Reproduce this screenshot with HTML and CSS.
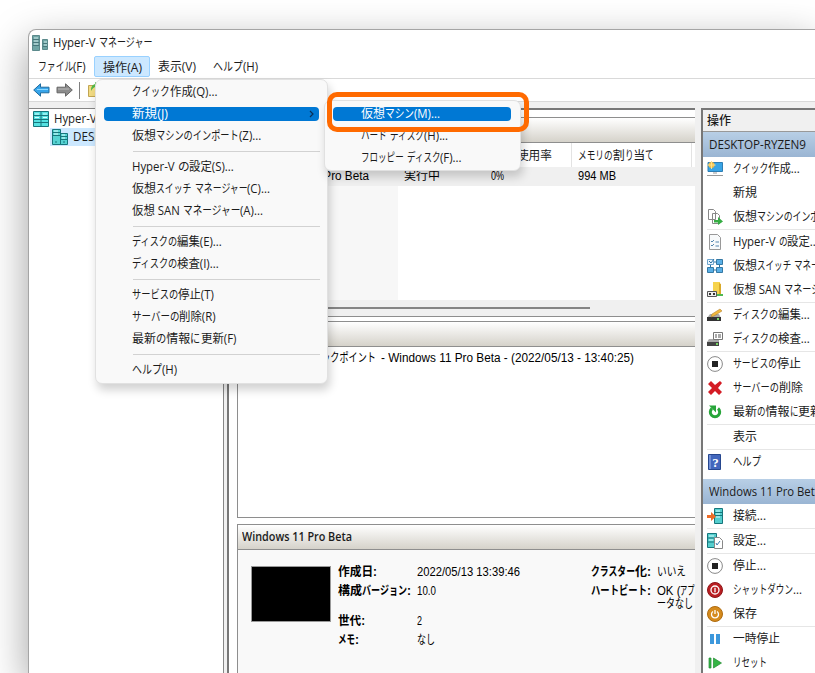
FILE: index.html
```html
<!DOCTYPE html>
<html lang="ja">
<head>
    <meta charset="UTF-8">
    <title>Hyper-V マネージャー</title>
    <link rel="stylesheet" href="styles.css">
</head>
<body>
<svg class="defs" width="0" height="0">
    <symbol id="i-server" viewBox="0 0 16 16">
        <path fill="#55d3d3" stroke="#16767c" d="M.5.5h8v15h-8zM8.500 4.500h7v11h-7z"/>
        <path stroke="#16767c" d="M1 3.500h7M1 6.500h7M9 7.500h6M9 10.500h6M3 13h2M11 13h2"/>
        <path stroke="#d8ffff" d="M2 2h4M2 5h4M10 6h3M10 9h3"/>
    </symbol>
    <symbol id="i-stop" viewBox="0 0 16 16">
        <circle cx="8" cy="8" r="7.400" fill="#fff" stroke="#888"/>
        <path fill="#222" d="M5 5h6v6H5z"/>
    </symbol>
</svg>

<div class="window">
    <div class="titlebar">
        <svg class="app-icon" width="17" height="16" viewBox="0 0 17 16">
            <path fill="#6fa5a5" stroke="#5c8a8c" d="M.5.5h7v15h-7zM10.500 4.500h5v10h-5z"/>
            <path stroke="#d4eded" d="M2 3h4M2 6h4M2 9h4M12 7h3M12 10h3"/>
            <path stroke="#47777b" d="M1 4.500h6M1 7.500h6M1 10.500h6M11 8.500h4M11 11.500h4"/>
        </svg>
        <span data-w="99">Hyper-V マネージャー</span>
    </div>
    <div class="menubar">
        <div class="menu-title m1"><span data-w="48">ファイル(F)</span></div>
        <div class="menu-title m2 open"><span data-w="39">操作(A)</span></div>
        <div class="menu-title m3"><span data-w="38">表示(V)</span></div>
        <div class="menu-title m4"><span data-w="45">ヘルプ(H)</span></div>
    </div>
    <div class="toolbar">
        <svg width="17" height="14" viewBox="0 0 17 14"><path fill="#37a5ea" stroke="#1f6b9e" d="M.7 7 7.500.8v3.400h8.500v5.600H7.500v3.400z"/><path stroke="#8ad7ff" d="M4 6.500h11"/></svg>
        <svg width="17" height="14" viewBox="0 0 17 14"><path fill="#8c8c8c" stroke="#666" d="M16.300 7 9.500.8v3.400H1v5.600h8.500v3.400z"/><path stroke="#bbb" d="M2 6h11"/></svg>
        <i class="tool-sep"></i>
        <svg width="16" height="16" viewBox="0 0 16 16"><path fill="#f3dc84" stroke="#c2a654" d="M.5 3.500h5l2 2h8v9H.5z"/><path fill="#54b948" d="M3 9c0-4 1-6 4-7V0l5 4-5 4V5C5 6 4 7 3 9z"/></svg>
    </div>

    <div class="panes">
        <div class="tree">
            <div class="node root"><svg width="16" height="16" viewBox="0 0 16 16"><path fill="#55e1e1" stroke="#16767c" d="M.5.5h15v15H.5z"/><path stroke="#16767c" d="M8 1v14M1 4.500h14M1 8.500h14M1 11.500h14"/><path stroke="#d8ffff" d="M2 3h4M10 3h4M2 6.500h4M10 6.500h4"/></svg><span data-w="99">Hyper-V マネージャー</span></div>
            <div class="node host"><svg width="16" height="16"><use href="#i-server"/></svg><span data-w="97">DESKTOP-RYZEN9</span></div>
        </div>

        <div class="center">
            <div class="box vms">
                <div class="box-head"></div>
                <div class="vm-row cols">
                    <div class="c-name"></div>
                    <div class="c-state"></div>
                    <div class="c-cpu"><span data-w="61">CPU 使用率</span></div>
                    <div class="c-mem"><span data-w="76">メモリの割り当て</span></div>
                </div>
                <div class="vm-row selected legacy">
                    <div class="c-name"><span data-w="112">Windows 11 Pro Beta</span></div>
                    <div class="c-state"><span data-w="36">実行中</span></div>
                    <div class="c-cpu"><span data-w="13">0%</span></div>
                    <div class="c-mem"><span data-w="38">994 MB</span></div>
                </div>
                <div class="vm-space"></div>
                <div class="scroll"><div class="thumb"></div></div>
            </div>
            <div class="box checkpoints">
                <div class="box-head"></div>
                <div class="checkpoint legacy"><span data-w="97">自動チェックポイント</span><span data-w="253">- Windows 11 Pro Beta - (2022/05/13 - 13:40:25)</span></div>
            </div>
            <div class="box details">
                <div class="box-head"><span data-w="110">Windows 11 Pro Beta</span></div>
                <div class="detail-body legacy">
                    <div class="thumbnail"></div>
                    <dl class="info left">
                        <dt><span data-w="39">作成日:</span></dt><dd><span data-w="103">2022/05/13 13:39:46</span></dd>
                        <dt><span data-w="73">構成バージョン:</span></dt><dd><span data-w="19">10.0</span></dd>
                        <dt class="gap"><span data-w="27">世代:</span></dt><dd class="gap"><span data-w="5">2</span></dd>
                        <dt><span data-w="21">メモ:</span></dt><dd><span data-w="18">なし</span></dd>
                    </dl>
                    <dl class="info right">
                        <dt><span data-w="60">クラスター化:</span></dt><dd><span data-w="29">いいえ</span></dd>
                        <dt><span data-w="60">ハートビート:</span></dt><dd class="two"><span data-w="38">OK (アプ</span><br><span data-w="36">ータなし</span></dd>
                    </dl>
                </div>
            </div>
        </div>

        <div class="actions">
            <div class="actions-title"><span data-w="24">操作</span></div>
            <div class="group"><span data-w="97">DESKTOP-RYZEN9</span></div>
            <div class="action"><svg viewBox="0 0 16 16"><path fill="#38a4e5" stroke="#2d7eb5" d="M1 1.500h14.500v9H1z"/><path stroke="#999" d="M0 14.500h16M6 12h4"/><circle cx="4.500" cy="4" r="3" fill="#f3bd45"/><path stroke="#ffe18a" d="M4.500 0v8M.5 4h8"/></svg><span data-w="67">クイック作成...</span></div>
            <div class="action"><svg></svg><span data-w="24">新規</span></div>
            <div class="action sep"><svg viewBox="0 0 16 16"><path fill="#fff" stroke="#888" d="M1.500.5h5l2 2v8h-7zM5.500 4.500h5l2 2v8h-7z"/><path fill="#35ad43" d="M7 11h4V8l5 4.500-5 3.500v-2.500H7z"/></svg><span data-w="113">仮想マシンのインポート...</span></div>
            <div class="action"><svg viewBox="0 0 16 16"><path fill="#f8fafb" stroke="#999" d="M2.500.5h8l3 3v12h-11z"/><path fill="none" stroke="#5586ad" d="m4 7 1 1 2-2M4 11l1 1 2-2M8.500 8H12M8.500 12H12"/></svg><span data-w="86">Hyper-V の設定...</span></div>
            <div class="action"><svg viewBox="0 0 16 16"><path fill="#59afe6" stroke="#3579a4" d="M9.500 1.500h6v5h-6zM.5 9.500h6v5h-6zM9.500 9.500h6v5h-6z"/><path fill="#eaf5ff" stroke="#6da5ce" d="M.5 1.500h6v5h-6z"/><path fill="none" stroke="#286f9f" d="m2 3 2 2 3-4M7 4h2M3.500 7v2M12.500 7v2M7 12h2"/></svg><span data-w="121">仮想スイッチ マネージャー...</span></div>
            <div class="action sep"><svg viewBox="0 0 16 16"><path fill="#f6d34d" d="M6 0h7v12H6z"/><path fill="#d9a929" d="m12 1 2 1v10h-2z"/><path fill="#eee" stroke="#555" d="M.5 9.500h9v5h-9z"/><path fill="#333" d="M2 11h2v2H2zM6 11h2v2H6z"/><path fill="#4eb852" d="M10 12h6v2h-6z"/></svg><span data-w="114">仮想 SAN マネージャー...</span></div>
            <div class="action"><svg viewBox="0 0 16 16"><path fill="#aaa" d="m3 7-3 4h14l-2-4z"/><path fill="#333" d="M0 10h14v4H0z"/><path fill="#75d463" d="M10 11h2v2h-2z"/><path fill="#f0b73d" stroke="#a9792d" stroke-width=".5" d="m4 10 1-3 8-5 2 2-8 5z"/></svg><span data-w="77">ディスクの編集...</span></div>
            <div class="action sep"><svg viewBox="0 0 16 16"><path fill="#aaa" d="m2 8-2 3h12V8z"/><path fill="#444" d="M0 11h12v4H0z"/><path fill="#75d463" d="M9 12h2v2H9z"/><path fill="#fff" stroke="#777" d="M6.500 1.500h9v7h-9z"/><path stroke="#555" d="M8 4h2m1 0h3M8 6h2m1 0h3"/></svg><span data-w="77">ディスクの検査...</span></div>
            <div class="action"><svg><use href="#i-stop"/></svg><span data-w="68">サービスの停止</span></div>
            <div class="action"><svg viewBox="0 0 16 16"><path fill="#d41b24" d="m1 4 3-3 4 4 5-4 2 2-4 5 4 4-3 3-4-4-4 4-3-3 4-4z"/></svg><span data-w="70">サーバーの削除</span></div>
            <div class="action sep"><svg viewBox="0 0 16 16"><path fill="none" stroke="#27a53a" stroke-width="3" d="M11 4.500a4.700 4.700 0 1 1-6 0"/><path fill="#27a53a" d="M2 1.500h7v7z"/></svg><span data-w="89">最新の情報に更新</span></div>
            <div class="action sep"><svg></svg><span data-w="24">表示</span></div>
            <div class="action"><svg viewBox="0 0 16 16"><path fill="#4267bd" stroke="#26478e" d="M1.500.5h12v15h-12z"/><path stroke="#a0b8ee" d="M3 1v14"/><text x="8.500" y="12.500" text-anchor="middle" class="q">?</text></svg><span data-w="28">ヘルプ</span></div>
            <div class="group second"><span data-w="112">Windows 11 Pro Beta</span></div>
            <div class="action sep"><svg viewBox="0 0 16 16"><path fill="#55cece" stroke="#16767c" d="M7.500.5h8v15h-8z"/><path stroke="#d8ffff" d="M9 3h4M9 6h4M9 9h4"/><path stroke="#16767c" d="M8 4.500h7M8 7.500h7"/><path fill="#ed6c27" d="M0 7h4V4l5 4.500L4 13v-3H0z"/></svg><span data-w="33">接続...</span></div>
            <div class="action sep"><svg viewBox="0 0 16 16"><path fill="#55cece" stroke="#16767c" d="M.5.5h9v14h-9z"/><path stroke="#d8ffff" d="M2 3h5M2 7h4"/><path stroke="#16767c" d="M1 5h8M1 9h6"/><path fill="#fff" stroke="#888" d="M7.500 4.500h5l3 3v8h-8z"/><path fill="none" stroke="#3c7caf" d="m9 10 1 2 3-4"/></svg><span data-w="33">設定...</span></div>
            <div class="action"><svg><use href="#i-stop"/></svg><span data-w="33">停止...</span></div>
            <div class="action"><svg viewBox="0 0 16 16"><circle cx="8" cy="8" r="7.500" fill="#b91e22" stroke="#8e1519"/><circle cx="8" cy="8" r="4" fill="none" stroke="#fff" stroke-width="1.300"/><path stroke="#fff" stroke-width="1.300" d="M8 5.800v4.400"/></svg><span data-w="69">シャットダウン...</span></div>
            <div class="action sep"><svg viewBox="0 0 16 16"><circle cx="8" cy="8" r="7.500" fill="#d58a1c" stroke="#ae6c11"/><path fill="none" stroke="#fff" stroke-width="1.300" d="M6 5.500a3.500 3.500 0 1 0 4 0M8 4v4"/></svg><span data-w="24">保存</span></div>
            <div class="action"><svg viewBox="0 0 16 16"><path fill="#3d98dc" d="M3 3h4v10H3zM9 3h4v10H9z"/></svg><span data-w="47">一時停止</span></div>
            <div class="action"><svg viewBox="0 0 16 16"><path fill="#35b545" stroke="#218a30" stroke-width=".7" d="M2 3h2v10H2zM6.500 3l8 5-8 5z"/></svg><span data-w="34">リセット</span></div>
        </div>
    </div>
</div>

<div class="popup main-menu">
    <div class="item"><span data-w="85">クイック作成(Q)...</span></div>
    <div class="item active"><span data-w="36">新規(J)</span><svg class="arrow" width="5" height="8" viewBox="0 0 5 8"><path fill="none" stroke="#0b2f55" stroke-width="1.200" d="m1 1 3 3-3 3"/></svg></div>
    <div class="item"><span data-w="129">仮想マシンのインポート(Z)...</span></div>
    <hr>
    <div class="item"><span data-w="102">Hyper-V の設定(S)...</span></div>
    <div class="item"><span data-w="138">仮想スイッチ マネージャー(C)...</span></div>
    <div class="item"><span data-w="131">仮想 SAN マネージャー(A)...</span></div>
    <hr>
    <div class="item"><span data-w="90">ディスクの編集(E)...</span></div>
    <div class="item"><span data-w="87">ディスクの検査(I)...</span></div>
    <hr>
    <div class="item"><span data-w="82">サービスの停止(T)</span></div>
    <div class="item"><span data-w="84">サーバーの削除(R)</span></div>
    <div class="item"><span data-w="104">最新の情報に更新(F)</span></div>
    <hr>
    <div class="item"><span data-w="45">ヘルプ(H)</span></div>
</div>

<div class="popup sub-menu">
    <div class="item active"><span data-w="79">仮想マシン(M)...</span></div>
    <div class="item"><span data-w="87">ハード ディスク(H)...</span></div>
    <div class="item"><span data-w="101">フロッピー ディスク(F)...</span></div>
</div>
<div class="marker"></div>

<script src="script.js"></script>
</body>
</html>
```
FILE: styles.css
```css
* {
    box-sizing: border-box;
}
body {
    margin: 0;
    padding: 29px 0 0 28px;
    width: 815px;
    height: 673px;
    overflow: hidden;
    background: #fff;
    color: #1b1b1b;
    font: 12px/16px "Open Sans", "Noto Sans CJK JP", sans-serif;
    white-space: nowrap;
}
.defs {
    position: absolute;
}
svg {
    flex: none;
    display: block;
}
.fit {
    display: inline-block;
    transform-origin: 0 50%;
    white-space: pre;
}
.legacy {
    font-family: "Liberation Sans", "Noto Sans CJK JP", sans-serif;
    color: #000;
}

/* window */
.window {
    width: 787px;
    height: 644px;
    border: 1px solid #a5a5a5;
    border-width: 1px 0 0 1px;
    border-radius: 8px 0 0 0;
    background: #fff;
    box-shadow: 0 14px 42px rgba(0, 0, 0, .38);
    overflow: hidden;
}
.titlebar {
    display: flex;
    align-items: center;
    height: 25px;
    padding: 0 0 0 3px;
    gap: 4px;
}
.menubar {
    display: flex;
    align-items: center;
    height: 24px;
    border-bottom: 1px solid #d9d9d9;
}
.menu-title {
    height: 21px;
    line-height: 20px;
    padding: 1px 8px;
}
.m1 {
    padding-left: 9px;
    width: 65px;
}
.m2 {
    width: 56px;
}
.m3 {
    width: 55px;
}
.menu-title.open {
    background: #cce8ff;
    border: 1px solid #99d1ff;
    border-radius: 2px;
    line-height: 20px;
}
.toolbar {
    display: flex;
    align-items: center;
    height: 23px;
    padding-left: 4px;
    gap: 6px;
    border-bottom: 1px solid #d9d9d9;
}
.tool-sep {
    width: 1px;
    height: 17px;
    margin-right: 2px;
    background: #808080;
}
.panes {
    display: flex;
    height: 571px;
    padding-top: 6px;
    background: #f0f0f0;
}

/* left tree */
.tree {
    flex: none;
    width: 195px;
    margin-right: 3px;
    background: #fff;
    border: 1px solid #868686;
    border-width: 1px 1px 0 0;
    padding-top: 1px;
}
.node {
    display: flex;
    align-items: center;
    height: 18px;
    padding-left: 4px;
    gap: 5px;
}
.host {
    margin-left: 21px;
    padding-left: 2px;
    background: #cce8ff;
}

/* center column */
.center {
    flex: none;
    width: 468px;
    padding: 7px 0 0 8px;
    border-top: 2px solid #777;
    border-left: 2px solid #777;
    background: #fff;
    overflow: hidden;
}
.box {
    width: 458px;
    border: 1px solid #8e8e8e;
    border-right: 0;
}
.box-head {
    height: 25px;
    padding: 4px;
    line-height: 16px;
    border-bottom: 1px solid #8e8e8e;
    background: linear-gradient(#fff, #d5d2ca);
    font-weight: 600;
}
.vms {
    height: 200px;
}
.vm-row {
    display: flex;
    height: 24px;
    line-height: 25px;
}
.vm-row > div {
    flex: none;
    padding-left: 6px;
}
.vm-row .c-name {
    width: 160px;
    padding-left: 19px;
}
.c-state {
    width: 87px;
}
.c-cpu {
    width: 87px;
}
.c-mem {
    width: 120px;
}
.cols > div {
    border-right: 1px solid #e3e3e3;
}
.selected {
    height: 19px;
    line-height: 19px;
    background: #f0f0f0;
}
.vm-space {
    width: 160px;
    height: 114px;
    background: #f7f7f7;
}
.scroll {
    height: 16px;
    padding-top: 7px;
    background: #f0f0f0;
}
.thumb {
    width: 352px;
    height: 2px;
    background: #858585;
}
.checkpoints {
    margin-top: 4px;
    height: 197px;
}
.checkpoint {
    display: flex;
    gap: 5px;
    padding: 3px 0 0 41px;
}
.details {
    margin-top: 6px;
    height: 150px;
    border-bottom: 0;
    background: #f9f9f9;
}
.detail-body {
    display: flex;
    padding: 13px 0 0 13px;
}
.thumbnail {
    flex: none;
    width: 80px;
    height: 56px;
    margin-top: 3px;
    background: #000;
    border: 1px solid #999;
}
.info {
    flex: none;
    display: grid;
    margin: 0;
    line-height: 19px;
    align-content: start;
}
.info dt {
    font-weight: bold;
}
.info dd {
    margin: 0;
}
.left {
    grid-template-columns: 79px 174px;
    margin-left: 7px;
}
.right {
    grid-template-columns: 66px 36px;
}
.info .gap {
    margin-top: 11px;
}
.two {
    line-height: 13px;
    padding-top: 3px;
}

/* actions pane */
.actions {
    flex: none;
    width: 114px;
    margin-left: 6px;
    border-top: 2px solid #777;
    border-left: 2px solid #777;
    background: #fff;
    overflow: hidden;
}
.actions-title {
    height: 22px;
    padding-left: 4px;
    line-height: 22px;
    font-weight: 500;
    background: #f0f0f0;
    border-bottom: 1px solid #999;
}
.group {
    height: 25px;
    padding-left: 6px;
    line-height: 25px;
    background: linear-gradient(#b8cfe6, #9ab5d3);
}
.second {
    margin: 5px 0 0;
}
.action {
    display: flex;
    align-items: center;
    height: 24px;
    padding-left: 4px;
    gap: 10px;
}
.action svg {
    width: 16px;
    height: 16px;
}
.sep {
    height: 25px;
    padding-bottom: 1px;
    background: linear-gradient(#e6e6e6, #e6e6e6) 4px 24px no-repeat;
    background-size: 100% 1px;
}
.q {
    fill: #fff;
    font: bold 13px "Liberation Serif", serif;
}

/* popup menus */
.popup {
    position: absolute;
    background: #f9f9f9;
    border: 1px solid #e1e1e1;
    border-radius: 7px;
    box-shadow: 2px 6px 10px rgba(0, 0, 0, .18);
}
.main-menu {
    left: 95px;
    top: 79px;
    width: 233px;
    height: 305px;
    padding: 1px 8px;
}
.sub-menu {
    left: 324px;
    top: 100px;
    width: 197px;
    height: 71px;
    padding: 2px 9px 2px 8px;
}
.item {
    position: relative;
    height: 22px;
    line-height: 22px;
    padding-left: 28px;
}
.popup hr {
    height: 1px;
    margin: 4px -1px 4px 29px;
    border: 0;
    background: #d2d2d2;
}
.popup .active {
    height: 14px;
    line-height: 14px;
    margin: 4px 0;
    border-radius: 4px;
    background: #0078d4;
    color: #fff;
}
.arrow {
    position: absolute;
    right: 5px;
    top: 3px;
}
.marker {
    position: absolute;
    left: 327px;
    top: 92px;
    width: 202px;
    height: 40px;
    border: 5px solid #ff6a00;
    border-radius: 10px;
}
```
FILE: script.js
```js
// UI fonts draw kana narrower than kanji, so condense the kana runs of each
// label until it has its data-w width. Labels without kana shrink as a whole.
function condense(el, ratio) {
    const w = el.getBoundingClientRect().width;
    el.style.transform = `scaleX(${ratio})`;
    el.style.marginRight = `${w * (ratio - 1)}px`;
}

document.querySelectorAll("[data-w]").forEach(label => {
    const target = Number(label.dataset.w);
    const parts = label.textContent.split(/([\u3040-\u30ff]+)/).filter(p => p);
    label.textContent = "";
    const spans = parts.map(text => {
        const span = document.createElement("span");
        span.className = "fit";
        span.textContent = text;
        label.appendChild(span);
        return span;
    });
    const width = s => s.getBoundingClientRect().width;
    const kana = spans.filter(s => /[\u3040-\u30ff]/.test(s.textContent));
    const latin = spans.filter(s => /[A-Za-z.]/.test(s.textContent));
    if (kana.length) {
        latin.forEach(s => condense(s, 0.95));
    }
    const sum = list => list.reduce((t, s) => t + width(s), 0);
    const total = sum(spans);
    const flexible = kana.length ? kana : spans;
    const own = sum(flexible);
    const ratio = (target - (total - own)) / own;
    flexible.forEach(s => condense(s, ratio));
});
```
